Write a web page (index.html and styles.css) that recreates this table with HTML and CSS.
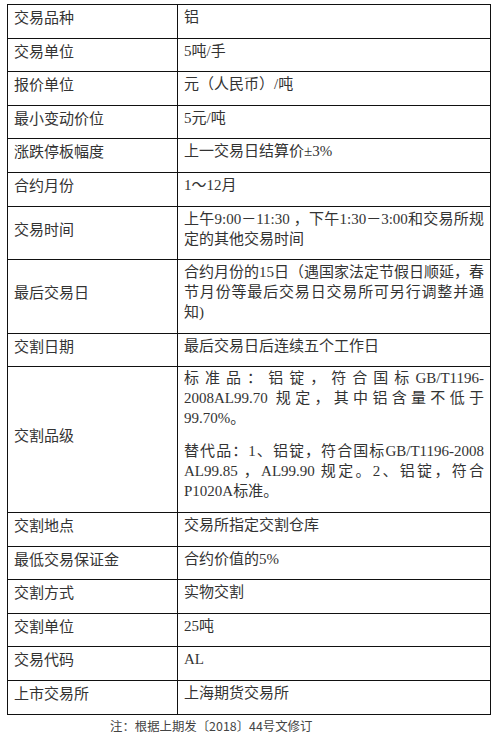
FILE: index.html
```html
<!DOCTYPE html>
<html lang="zh-CN">
<head>
<meta charset="utf-8">
<title>铝期货合约</title>
<link rel="stylesheet" href="styles.css">
</head>
<body>
<div class="page">
  <table class="spec">
    <tbody>
      <tr><td class="k">交易品种</td><td class="v">铝</td></tr>
      <tr><td class="k">交易单位</td><td class="v">5吨/手</td></tr>
      <tr><td class="k">报价单位</td><td class="v">元（人民币）/吨</td></tr>
      <tr><td class="k">最小变动价位</td><td class="v">5元/吨</td></tr>
      <tr><td class="k">涨跌停板幅度</td><td class="v">上一交易日结算价±3%</td></tr>
      <tr><td class="k">合约月份</td><td class="v">1～12月</td></tr>
      <tr><td class="k">交易时间</td><td class="v">上午9:00－11:30 ，下午1:30－3:00和交易所规定的其他交易时间</td></tr>
      <tr><td class="k">最后交易日</td><td class="v">合约月份的15日（遇国家法定节假日顺延，春节月份等最后交易日交易所可另行调整并通知)</td></tr>
      <tr><td class="k">交割日期</td><td class="v">最后交易日后连续五个工作日</td></tr>
      <tr><td class="k">交割品级</td><td class="v multi"><p>标准品：铝锭，符合国标GB/T1196-2008AL99.70 规定，其中铝含量不低于99.70%。</p><p>替代品：1、铝锭，符合国标GB/T1196-2008 AL99.85 ，AL99.90 规定。2、铝锭，符合P1020A标准。</p></td></tr>
      <tr><td class="k">交割地点</td><td class="v">交易所指定交割仓库</td></tr>
      <tr><td class="k">最低交易保证金</td><td class="v">合约价值的5%</td></tr>
      <tr><td class="k">交割方式</td><td class="v">实物交割</td></tr>
      <tr><td class="k">交割单位</td><td class="v">25吨</td></tr>
      <tr><td class="k">交易代码</td><td class="v">AL</td></tr>
      <tr><td class="k">上市交易所</td><td class="v">上海期货交易所</td></tr>
    </tbody>
  </table>
  <p class="note">注：根据上期发〔2018〕44号文修订</p>
</div>
</body>
</html>
```

FILE: styles.css
```css
html, body {
  margin: 0;
  padding: 0;
  background: #fff;
}

.page {
  padding: 4px 0 0 7px;
}

.spec {
  border-collapse: collapse;
  width: 484px;
  table-layout: fixed;
  font-family: "Liberation Serif", "Noto Sans CJK SC", serif;
  font-size: 15px;
  line-height: 20px;
  color: #333;
}

.spec td {
  border: 1px solid #111;
  padding: 2px 6px 10.6px 6px;
  vertical-align: middle;
}

.spec td.k {
  width: 157px;
  font-family: "Noto Sans CJK SC", sans-serif;
}

.spec td.v {
  text-align: justify;
}

.spec td.multi {
  padding-top: 1px;
}

.spec td.multi p {
  margin: 0;
}

.spec td.multi p + p {
  margin-top: 13px;
}

.note {
  margin: 2px 0 0 103px;
  font-family: "Noto Sans CJK SC", sans-serif;
  font-size: 12.4px;
  line-height: 18px;
  color: #444;
}
```
